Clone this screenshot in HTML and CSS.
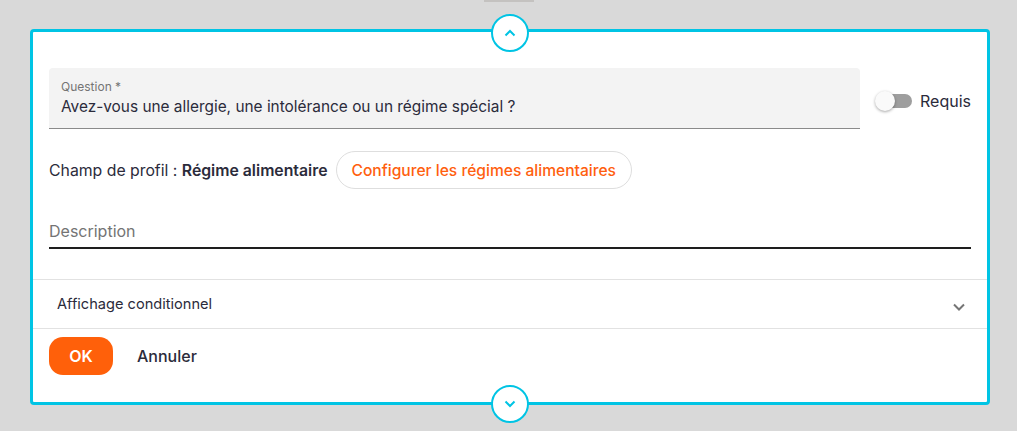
FILE: index.html
```html
<!DOCTYPE html>
<html lang="fr">
  <head>
    <meta charset="UTF-8" />
    <meta name="viewport" content="width=device-width, initial-scale=1.0" />
    <title>Question</title>
    <link rel="stylesheet" href="styles.css">
  </head>
  <body>
    <div class="prev-edge"></div>
    <div class="card">
      <button class="move-btn move-up" aria-label="Monter">
        <svg width="12" height="8" viewBox="0 0 12 8"><path d="M1.5 6.5 L6 2 L10.5 6.5" fill="none" stroke="currentColor" stroke-width="2"/></svg>
      </button>

      <div class="fields">
        <div class="row">
          <div class="text-field">
            <label>Question *</label>
            <div class="value">Avez-vous une allergie, une intolérance ou un régime spécial ?</div>
          </div>
          <div class="switch">
            <span class="track"><span class="knob"></span></span>
            <span>Requis</span>
          </div>
        </div>

        <div class="profile">
          <span>Champ de profil : <b>Régime alimentaire</b></span>
          <button class="outline-btn">Configurer les régimes alimentaires</button>
        </div>

        <div class="desc">Description</div>
      </div>

      <div class="accordion">
        <span>Affichage conditionnel</span>
        <svg width="12" height="8" viewBox="0 0 12 8"><path d="M1 1.5 L6 6.5 L11 1.5" fill="none" stroke="#757575" stroke-width="2"/></svg>
      </div>

      <div class="actions">
        <button class="ok-btn">OK</button>
        <button class="text-btn">Annuler</button>
      </div>

      <button class="move-btn move-down" aria-label="Descendre">
        <svg width="12" height="8" viewBox="0 0 12 8"><path d="M1.5 1.5 L6 6 L10.5 1.5" fill="none" stroke="currentColor" stroke-width="2"/></svg>
      </button>
    </div>
  </body>
</html>
```

FILE: styles.css
```css
* {
  margin: 0;
  padding: 0;
  box-sizing: border-box;
  font-family: "Inter", "Liberation Sans", sans-serif;
}

html,
body {
  height: 100%;
  overflow: hidden;
}

body {
  background: #d9d9d9;
  color: #2b2b3b;
}

button {
  border: none;
  outline: none;
  background: none;
  cursor: pointer;
  font-family: inherit;
}

.prev-edge {
  width: 50px;
  height: 2px;
  margin: 0 auto;
  background: #c4c2c0;
}

.card {
  position: relative;
  width: 960px;
  margin: 27px 0 26px 30px;
  background: #fff;
  border: 3px solid #00c4e4;
  border-radius: 4px;
}

.move-btn {
  position: absolute;
  z-index: 2;
  left: 50%;
  width: 38px;
  height: 38px;
  margin-left: -19px;
  border: 2px solid #00c4e4;
  border-radius: 50%;
  background: #fff;
  color: #00c4e4;
  display: flex;
  align-items: center;
  justify-content: center;
}

.move-up {
  top: -18px;
}

.move-down {
  bottom: -21px;
}

.fields {
  padding: 36px 16px 30px;
}

.row {
  display: flex;
  align-items: center;
  gap: 15px;
}

.text-field {
  flex: 1;
  height: 61px;
  background: #f3f3f3;
  border-radius: 4px 4px 0 0;
  border-bottom: 1px solid #8a8a8a;
  padding: 11px 12px 0;
}

.text-field label {
  display: block;
  font-size: 12px;
  line-height: 16px;
  color: #747474;
}

.text-field .value {
  font-size: 15.4px;
  line-height: 24px;
  color: #2b2b3b;
}

.switch {
  display: flex;
  align-items: center;
  gap: 8px;
  font-size: 16px;
  margin-top: 5px;
}

.track {
  position: relative;
  width: 33px;
  height: 14px;
  margin-left: 4px;
  border-radius: 7px;
  background: #9e9e9e;
}

.knob {
  position: absolute;
  left: -4px;
  top: -3px;
  width: 20px;
  height: 20px;
  border-radius: 50%;
  background: #fafafa;
  box-shadow: 0 1px 3px rgba(0, 0, 0, 0.35);
}

.profile {
  display: flex;
  align-items: center;
  gap: 8px;
  margin-top: 22px;
  font-size: 15.8px;
}

.profile b {
  font-weight: 600;
}

.outline-btn {
  height: 38px;
  padding: 0 15px;
  border: 1px solid #dedede;
  border-radius: 19px;
  color: #ff5f0f;
  font-size: 15.6px;
  font-weight: 500;
}

.desc {
  margin-top: 32px;
  font-size: 16px;
  line-height: 20px;
  color: #747474;
  padding-bottom: 6px;
  border-bottom: 2px solid #1e1e1e;
}

.accordion {
  display: flex;
  align-items: center;
  justify-content: space-between;
  height: 50px;
  padding: 0 22px 0 24px;
  border-top: 1px solid #e2e2e2;
  border-bottom: 1px solid #e2e2e2;
  font-size: 14.6px;
}

.accordion svg {
  margin-top: 6px;
}

.actions {
  display: flex;
  align-items: center;
  gap: 8px;
  padding: 8px 16px 27px;
}

.ok-btn {
  width: 64px;
  height: 38px;
  border-radius: 14px;
  background: #ff600a;
  color: #fff;
  font-size: 16px;
  font-weight: 600;
}

.text-btn {
  padding: 0 16px;
  font-size: 16px;
  font-weight: 500;
  color: #2b2b3b;
}
```
